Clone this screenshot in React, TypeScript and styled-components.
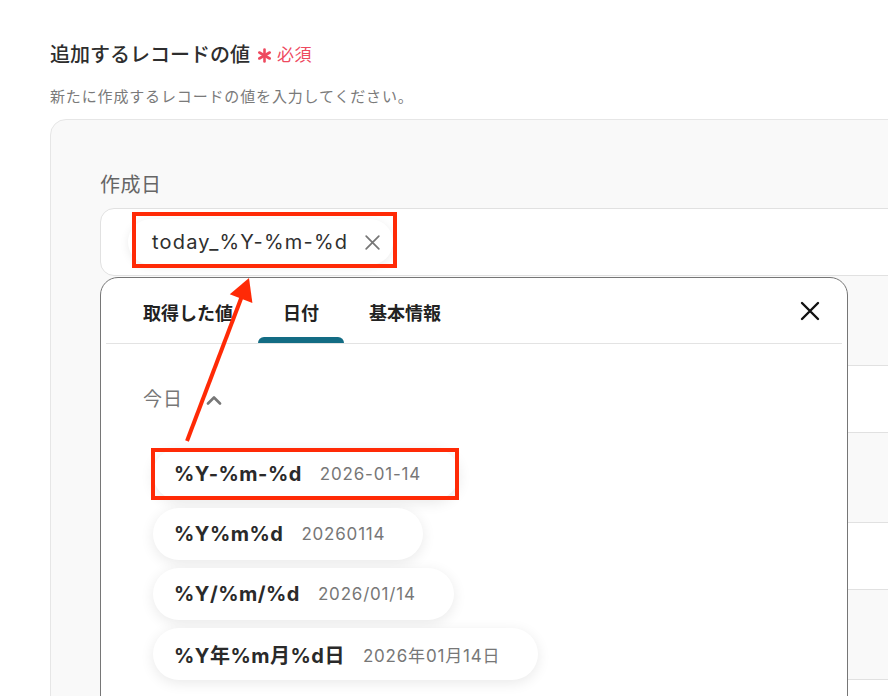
import React from 'react';
import styled, { createGlobalStyle } from 'styled-components';

const GlobalStyle = createGlobalStyle`
  html, body {
    margin: 0;
    padding: 0;
    background: #fff;
    overflow: hidden;
  }
  body {
    font-family: Inter, "Noto Sans CJK JP", sans-serif;
    color: #333;
    -webkit-font-smoothing: antialiased;
  }
  #root {
    width: 888px;
    height: 696px;
    overflow: hidden;
  }
`;

const Page = styled.div`
  position: relative;
  width: 888px;
  height: 696px;
  box-sizing: border-box;
  padding: 41px 0 0 50px;
  overflow: hidden;
`;

const TitleRow = styled.div`
  display: flex;
  align-items: center;
  gap: 7px;
`;

const Title = styled.h2`
  margin: 0;
  font-size: 20px;
  line-height: 28px;
  font-weight: 500;
  color: #2e2e2e;
`;

const Required = styled.span`
  display: flex;
  align-items: center;
  gap: 5px;
  font-size: 17px;
  line-height: 28px;
  letter-spacing: 0.5px;
  color: #ee4a5f;
`;

const Sub = styled.p`
  margin: 18px 0 0;
  font-size: 15px;
  line-height: 20px;
  letter-spacing: 0.85px;
  color: #7a7a7a;
`;

const Card = styled.div`
  margin-top: 12px;
  width: 1100px;
  box-sizing: border-box;
  padding: 53px 0 0 49px;
  border: 1px solid #e6e6e6;
  border-radius: 16px;
  background: #f9f9f9;
  display: flex;
  flex-direction: column;
  gap: 54px;
`;

const Field = styled.div`
  display: flex;
  flex-direction: column;
`;

const Label = styled.div`
  font-size: 20px;
  line-height: 24px;
  letter-spacing: 0.5px;
  color: #666;
  margin-bottom: 11px;
`;

const Input = styled.div`
  height: 68px;
  box-sizing: border-box;
  border: 1px solid #e1e1e1;
  border-radius: 14px;
  background: #fff;
  display: flex;
  align-items: center;
  padding-left: 27px;
`;

const Chip = styled.div`
  height: 46px;
  box-sizing: border-box;
  display: flex;
  align-items: center;
  gap: 15px;
  padding: 0 11px 0 24px;
  border-radius: 23px;
  background: #fff;
  box-shadow: 0 2px 10px rgba(0, 0, 0, 0.08);
  font-size: 20px;
  letter-spacing: 1.2px;
  color: #2f2f2f;
`;

const Popup = styled.div`
  position: absolute;
  left: 100px;
  top: 277px;
  width: 748px;
  height: 480px;
  box-sizing: border-box;
  border: 1px solid #767676;
  border-radius: 18px;
  background: #fff;
`;

const TabBar = styled.div`
  height: 65px;
  margin: 0 5px;
  padding: 0 20px 0 12px;
  display: flex;
  border-bottom: 1px solid #e3e3e3;
`;

const Tab = styled.div<{ active?: boolean }>`
  display: flex;
  flex-direction: column;
  font-size: 18px;
  font-weight: 600;
  line-height: 26px;
  color: #222;

  span {
    padding: 23px 25px 0;
  }

  i {
    margin-top: auto;
    height: 6px;
    border-radius: 6px 6px 0 0;
    background: ${(p) => (p.active ? '#136c84' : 'transparent')};
  }
`;

const Close = styled.button`
  margin-left: auto;
  align-self: center;
  padding: 0;
  border: none;
  background: none;
  display: flex;
  color: #111;
`;

const Body = styled.div`
  padding: 44px 0 0 42px;
`;

const SectionHead = styled.div`
  display: flex;
  align-items: center;
  gap: 23px;
  font-size: 19px;
  line-height: 24px;
  letter-spacing: 1px;
  color: #777;
`;

const List = styled.div`
  margin: 36px 0 0 10px;
  display: flex;
  flex-direction: column;
  align-items: flex-start;
  gap: 8px;
`;

const Pill = styled.div`
  height: 52px;
  box-sizing: border-box;
  display: flex;
  align-items: center;
  gap: 18px;
  padding: 0 38px 0 21px;
  border-radius: 26px;
  background: #fff;
  box-shadow: 0 3px 14px rgba(0, 0, 0, 0.09);
`;

const Format = styled.span`
  font-size: 20px;
  font-weight: 700;
  letter-spacing: 0.5px;
  color: #2a2a2a;
`;

const Sample = styled.span`
  font-size: 17px;
  letter-spacing: 0.8px;
  color: #777;
`;

const Annotations = styled.svg`
  position: absolute;
  left: 0;
  top: 0;
  pointer-events: none;
`;

const RED = '#ff2a06';

const formats = [
  { f: '%Y-%m-%d', s: '2026-01-14' },
  { f: '%Y%m%d', s: '20260114' },
  { f: '%Y/%m/%d', s: '2026/01/14' },
  { f: '%Y年%m月%d日', s: '2026年01月14日' },
];

const Asterisk = () => (
  <svg width="15" height="15" viewBox="0 0 15 15">
    <g stroke="#ee4a5f" strokeWidth="2.6" strokeLinecap="round">
      <line x1="7.5" y1="1.5" x2="7.5" y2="13.5" />
      <line x1="2.3" y1="4.5" x2="12.7" y2="10.5" />
      <line x1="2.3" y1="10.5" x2="12.7" y2="4.5" />
    </g>
  </svg>
);

const Cross = ({ size, color, width }: { size: number; color: string; width: number }) => (
  <svg width={size} height={size} viewBox="0 0 24 24">
    <path d="M4 4L20 20M20 4L4 20" stroke={color} strokeWidth={width} strokeLinecap="round" />
  </svg>
);

export default function App() {
  return (
    <>
      <GlobalStyle />
      <Page>
        <TitleRow>
          <Title>追加するレコードの値</Title>
          <Required>
            <Asterisk />
            必須
          </Required>
        </TitleRow>
        <Sub>新たに作成するレコードの値を入力してください。</Sub>
        <Card>
          <Field>
            <Label>作成日</Label>
            <Input>
              <Chip>
                today_%Y-%m-%d
                <Cross size={19} color="#767676" width={2.2} />
              </Chip>
            </Input>
          </Field>
          <Field>
            <Label>更新日</Label>
            <Input />
          </Field>
          <Field>
            <Label>タイトル</Label>
            <Input />
          </Field>
          <Field>
            <Label>担当者</Label>
            <Input />
          </Field>
        </Card>

        <Popup>
          <TabBar>
            <Tab>
              <span>取得した値</span>
              <i />
            </Tab>
            <Tab active>
              <span>日付</span>
              <i />
            </Tab>
            <Tab>
              <span>基本情報</span>
              <i />
            </Tab>
            <Close>
              <Cross size={24} color="#111" width={2.4} />
            </Close>
          </TabBar>
          <Body>
            <SectionHead>
              今日
              <svg width="16" height="10" viewBox="0 0 16 10">
                <path d="M2 8.5L8 2.5L14 8.5" fill="none" stroke="#777" strokeWidth="2.6" strokeLinecap="round" strokeLinejoin="round" />
              </svg>
            </SectionHead>
            <List>
              {formats.map((x) => (
                <Pill key={x.f}>
                  <Format>{x.f}</Format>
                  <Sample>{x.s}</Sample>
                </Pill>
              ))}
            </List>
          </Body>
        </Popup>

        <Annotations width="888" height="696">
          <rect x="134" y="214" width="261" height="52" fill="none" stroke={RED} strokeWidth="4" />
          <rect x="153" y="450" width="304" height="48" fill="none" stroke={RED} strokeWidth="4" />
          <line x1="187" y1="441" x2="242" y2="296" stroke={RED} strokeWidth="4" />
          <polygon points="249,278 252.4,302.9 229.8,294.3" fill={RED} />
        </Annotations>
      </Page>
    </>
  );
}
